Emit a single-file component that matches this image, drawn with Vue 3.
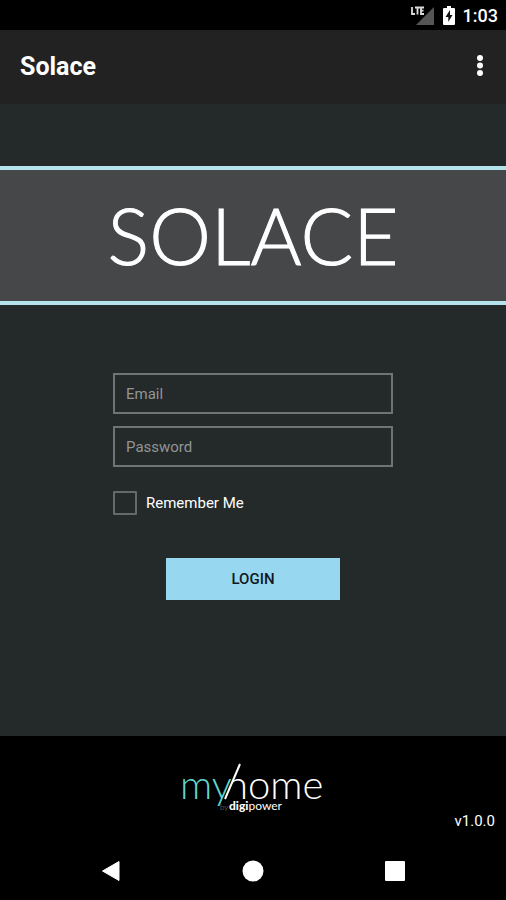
<script setup>
import { ref } from 'vue'

const email = ref('')
const password = ref('')
const remember = ref(false)
const version = 'v1.0.0'

function login() {
  if (!remember.value) {
    password.value = ''
  }
}
</script>

<template>
  <div class="screen">
    <div class="status-bar">
      <svg class="signal" width="24" height="20" viewBox="0 0 24 20">
        <path d="M23 2V20H5Z" fill="#555" />
        <rect x="0" y="0" width="14" height="11" fill="#000" />
        <path d="M1 2V9H4M4 2.500H9M6.500 2.500V9.500M13 2.500H10V9H13M10 5.700H12.500" fill="none" stroke="#ddd" stroke-width="1.800" />
      </svg>
      <svg class="battery" width="12" height="19" viewBox="0 0 12 19">
        <path d="M4 0H8V2H11Q12 2 12 3V18Q12 19 11 19H1Q0 19 0 18V3Q0 2 1 2H4Z" fill="#fff" />
        <path d="M7 4L2.500 11H5.300V16L9.500 9H7Z" fill="#111" />
      </svg>
      <span class="clock">1:03</span>
    </div>

    <header class="app-bar">
      <h1>Solace</h1>
      <button class="menu" type="button" aria-label="More options">
        <svg width="8" height="24" viewBox="0 0 8 24" fill="#fff">
          <circle cx="4" cy="3" r="3" />
          <circle cx="4" cy="10.500" r="3" />
          <circle cx="4" cy="18" r="3" />
        </svg>
      </button>
    </header>

    <main>
      <div class="banner">SOLACE</div>

      <form @submit.prevent="login">
        <input v-model="email" class="field" type="email" placeholder="Email" aria-label="Email" />
        <input v-model="password" class="field" type="password" placeholder="Password" aria-label="Password" />
        <label class="remember" for="remember">
          <input id="remember" v-model="remember" type="checkbox" />
          Remember Me
        </label>
        <button class="login" type="submit">LOGIN</button>
      </form>
    </main>

    <footer>
      <svg class="brand" width="146" height="52" viewBox="0 0 146 52">
        <defs>
          <!-- the slanted stroke stands in for the ascender of the h -->
          <clipPath id="arch">
            <path d="M52 14H150V40H52Z" />
          </clipPath>
        </defs>
        <text class="word teal" x="0" y="36">my</text>
        <text class="word" x="46" y="36" clip-path="url(#arch)">home</text>
        <path d="M60 1L45 36" stroke="#fff" stroke-width="2" />
        <text x="40" y="47" font-size="8" fill="#888">by</text>
        <text x="49" y="47" font-size="12" fill="#fff"><tspan font-weight="900">digi</tspan><tspan font-weight="400">power</tspan></text>
      </svg>
      <p class="version">{{ version }}</p>
    </footer>

    <nav>
      <button type="button" aria-label="Back">
        <svg width="20" height="22" viewBox="0 0 20 22">
          <path d="M18 1.500V20.500L1.500 11Z" fill="#fff" stroke="#fff" stroke-linejoin="round" />
        </svg>
      </button>
      <button type="button" aria-label="Home">
        <svg width="22" height="22" viewBox="0 0 22 22">
          <circle cx="11" cy="11" r="10.500" fill="#fff" />
        </svg>
      </button>
      <button type="button" aria-label="Recent apps">
        <svg width="20" height="20" viewBox="0 0 20 20">
          <rect width="20" height="20" rx="1" fill="#fff" />
        </svg>
      </button>
    </nav>
  </div>
</template>

<style>
body {
  margin: 0;
  background: #000;
}
</style>

<style scoped>
.screen {
  display: flex;
  flex-direction: column;
  min-height: 100vh;
  background: #242929;
  color: #fff;
  font-family: Roboto, sans-serif;
}

svg {
  display: block;
}

button {
  padding: 0;
  border: none;
  background: none;
  font-family: inherit;
  cursor: pointer;
}

.status-bar {
  display: flex;
  align-items: center;
  justify-content: flex-end;
  gap: 8px;
  height: 30px;
  padding-right: 8px;
  background: #000;
}

.clock {
  font-size: 18px;
  font-weight: 500;
}

.app-bar {
  display: flex;
  align-items: center;
  justify-content: space-between;
  height: 74px;
  padding: 0 22px 0 20px;
  background: #222;
}

.app-bar h1 {
  margin: 0;
  font-size: 25px;
  font-weight: 700;
  line-height: 28px;
}

main {
  flex: 1;
  padding-top: 62px;
}

.banner {
  border: solid #b4e3ec;
  border-width: 4px 0;
  background: #464749;
  font-family: Lato, sans-serif;
  font-size: 78px;
  font-weight: 300;
  line-height: 131px;
  text-align: center;
  -webkit-text-stroke: 1px #fff;
}

form {
  display: flex;
  flex-direction: column;
  padding: 68px 113px 40px;
}

.field {
  box-sizing: border-box;
  height: 41px;
  margin-bottom: 12px;
  padding: 0 11px;
  border: 2px solid #707373;
  border-radius: 0;
  outline: none;
  background: transparent;
  color: #fff;
  font-family: inherit;
  font-size: 15px;
}

.field::placeholder {
  color: #929595;
  opacity: 1;
}

.field:focus {
  border-color: #98d7f0;
}

.remember {
  display: flex;
  align-items: center;
  gap: 9px;
  margin-top: 12px;
  font-size: 15px;
}

.remember input {
  box-sizing: border-box;
  width: 24px;
  height: 24px;
  margin: 0;
  border: 2px solid #666969;
  border-radius: 1px;
  appearance: none;
}

.remember input:checked {
  background: #98d7f0;
}

.login {
  align-self: center;
  width: 62%;
  height: 42px;
  margin-top: 43px;
  background: #98d7f0;
  color: #101820;
  font-size: 15px;
  font-weight: 500;
}

footer {
  padding: 27px 11px 14px;
  background: #000;
}

.brand {
  margin: 0 auto;
  overflow: visible;
  font-family: Lato, sans-serif;
  font-weight: 300;
}

.word {
  fill: #fff;
  font-size: 40px;
}

.word.teal {
  fill: #5fd6cc;
}

.version {
  margin: 0;
  font-size: 15px;
  line-height: 13px;
  text-align: right;
}

nav {
  display: grid;
  grid-template-columns: repeat(3, 1fr);
  place-items: center;
  height: 58px;
  padding: 0 40px;
  background: #000;
}
</style>
